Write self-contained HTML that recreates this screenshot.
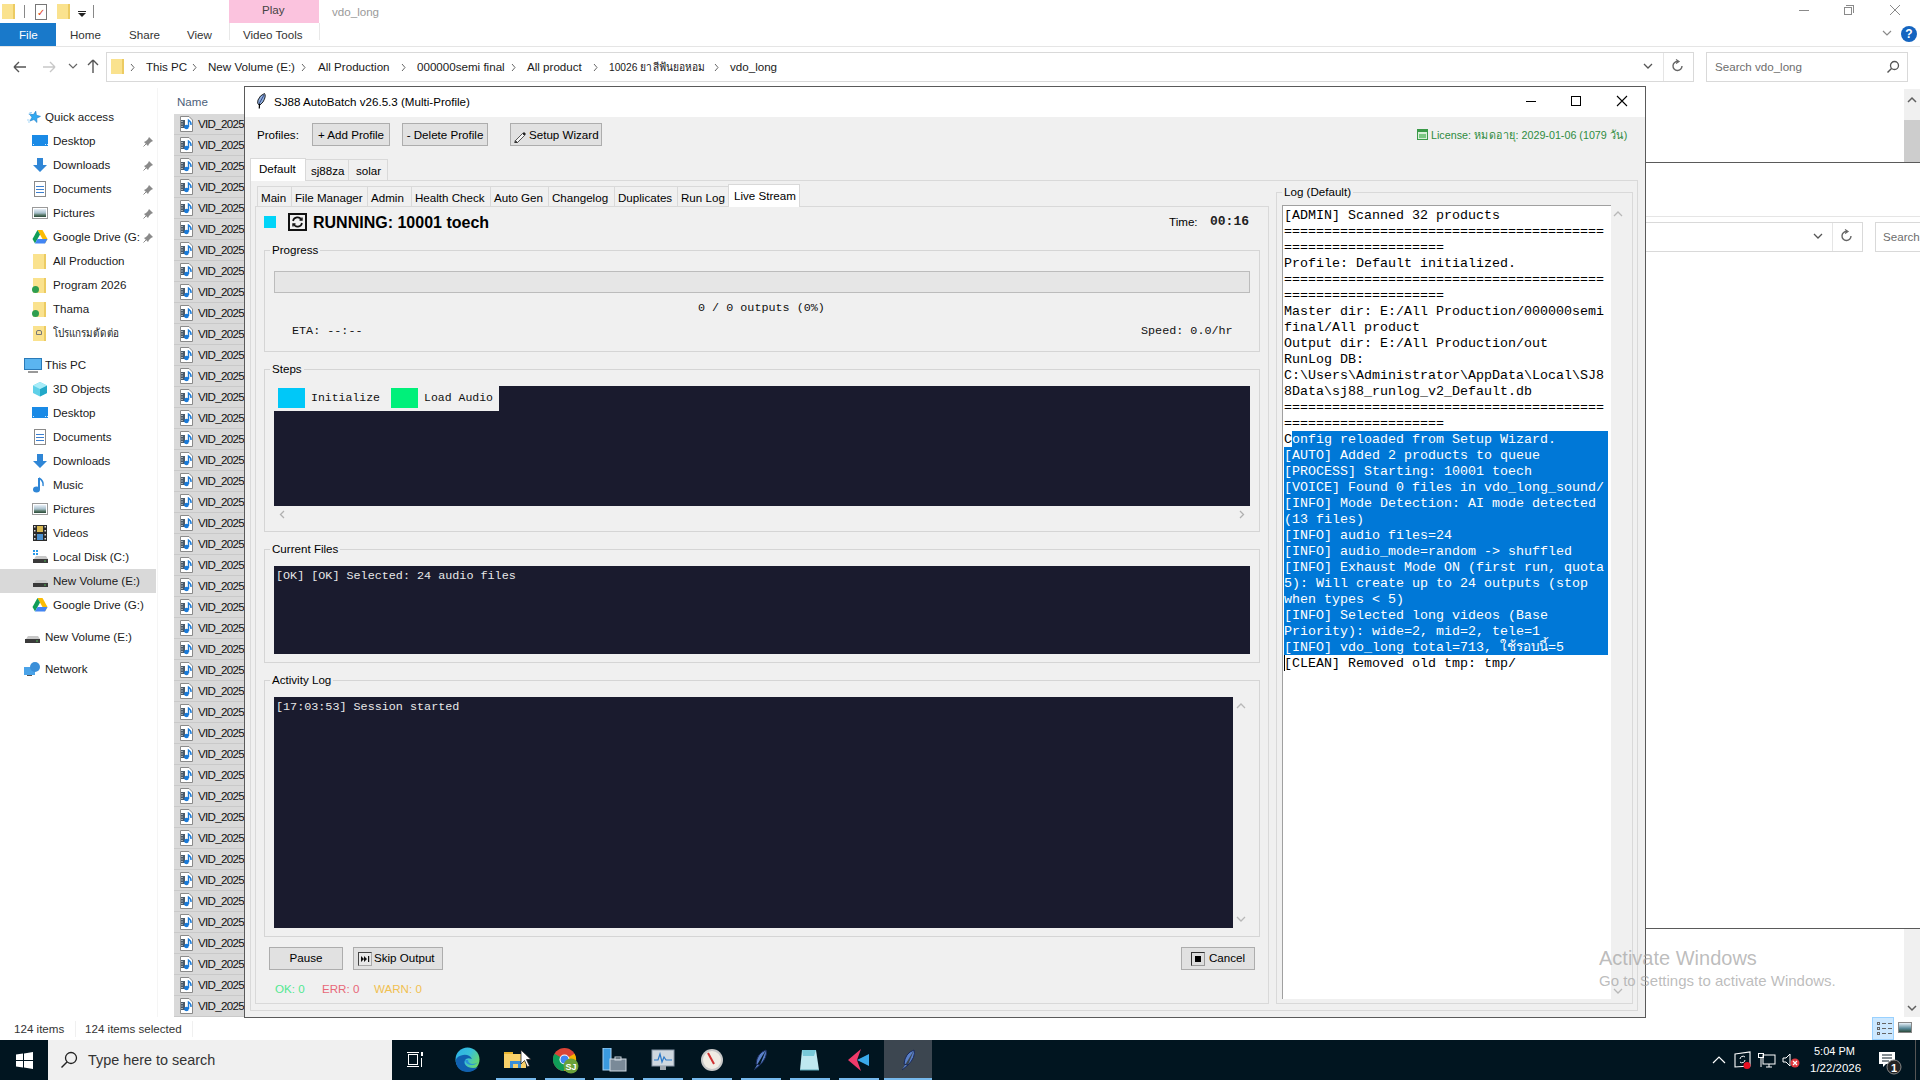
<!DOCTYPE html><html><head><meta charset="utf-8"><style>
*{margin:0;padding:0;box-sizing:border-box}
html,body{width:1920px;height:1080px;overflow:hidden;background:#fff;font-family:"Liberation Sans",sans-serif;font-size:11.6px;color:#000}
.ab{position:absolute}
.t{position:absolute;white-space:nowrap;line-height:14px}
.m{font-family:"Liberation Mono",monospace}
.hl{position:absolute;height:1px}
.vl{position:absolute;width:1px}
</style></head><body><div class="ab" style="left:0;top:0;width:1920px;height:1040px;background:#fff">
<div class="ab" style="left:2px;top:4px;width:13px;height:15px;background:#fae28e;border-right:2px solid #eccb62"></div>
<div class="ab" style="left:24px;top:5px;width:1px;height:13px;background:#888"></div>
<div class="ab" style="left:35px;top:4px;width:12px;height:16px;background:#fff;border:1px solid #777"></div>
<div class="t" style="left:37px;top:5px;"><span style="color:#e04020;font-size:10px">&#10003;</span></div>
<div class="ab" style="left:57px;top:4px;width:13px;height:15px;background:#fae28e;border-right:2px solid #eccb62"></div>
<div class="ab" style="left:78px;top:11px;width:8px;height:1px;background:#222"></div>
<div class="ab" style="left:78px;top:13px;width:0;height:0;border-left:4px solid transparent;border-right:4px solid transparent;border-top:4px solid #222"></div>
<div class="ab" style="left:93px;top:5px;width:1px;height:13px;background:#888"></div>
<div class="ab" style="left:229px;top:0px;width:90px;height:23px;background:#fbc3de"></div>
<div class="t" style="left:262px;top:3px;color:#444">Play</div>
<div class="t" style="left:332px;top:5px;color:#9a9a9a">vdo_long</div>
<div class="ab" style="left:1799px;top:10px;width:10px;height:1px;background:#8a8a8a"></div>
<div class="ab" style="left:1846px;top:5px;width:8px;height:8px;border:1px solid #8a8a8a;border-left:none;border-bottom:none"></div>
<div class="ab" style="left:1844px;top:7px;width:8px;height:8px;border:1px solid #8a8a8a"></div>
<svg class="ab" style="left:1889px;top:4px" width="12" height="12"><path d="M1 1L11 11M11 1L1 11" stroke="#8a8a8a" stroke-width="1"/></svg>
<div class="ab" style="left:0px;top:23px;width:56px;height:23px;background:#1979ca"></div>
<div class="t" style="left:19px;top:28px;color:#fff">File</div>
<div class="t" style="left:70px;top:28px;color:#333">Home</div>
<div class="t" style="left:129px;top:28px;color:#333">Share</div>
<div class="t" style="left:187px;top:28px;color:#333">View</div>
<div class="ab" style="left:229px;top:23px;width:1px;height:17px;background:#e8e8e8"></div>
<div class="ab" style="left:319px;top:23px;width:1px;height:17px;background:#e8e8e8"></div>
<div class="t" style="left:243px;top:28px;color:#333">Video Tools</div>
<svg class="ab" style="left:1882px;top:30px" width="10" height="8"><path d="M1 1L5 5L9 1" stroke="#8a8a8a" fill="none" stroke-width="1.2"/></svg>
<div class="ab" style="left:1901px;top:26px;width:16px;height:16px;border-radius:50%;background:#1565c0;color:#fff;font-weight:bold;font-size:12px;line-height:16px;text-align:center">?</div>
<div class="ab" style="left:0px;top:46px;width:1920px;height:1px;background:#e5e5e5"></div>
<svg class="ab" style="left:12px;top:59px" width="16" height="16"><path d="M2 8H14M2 8L7 3M2 8L7 13" stroke="#555" fill="none" stroke-width="1.4"/></svg>
<svg class="ab" style="left:41px;top:59px" width="16" height="16"><path d="M14 8H2M14 8L9 3M14 8L9 13" stroke="#c8c8c8" fill="none" stroke-width="1.4"/></svg>
<svg class="ab" style="left:68px;top:63px" width="10" height="8"><path d="M1 1L5 5L9 1" stroke="#666" fill="none" stroke-width="1.2"/></svg>
<svg class="ab" style="left:85px;top:58px" width="16" height="16"><path d="M8 15V2M8 2L3 7M8 2L13 7" stroke="#555" fill="none" stroke-width="1.4"/></svg>
<div class="ab" style="left:106px;top:52px;width:1588px;height:30px;border:1px solid #d9d9d9;background:#fff"></div>
<div class="ab" style="left:1663px;top:53px;width:1px;height:28px;background:#e5e5e5"></div>
<div class="ab" style="left:111px;top:59px;width:13px;height:15px;background:#fae28e;border-right:2px solid #eccb62"></div>
<svg class="ab" style="left:130px;top:63px" width="6" height="9"><path d="M1 1L4 4.5L1 8" stroke="#666" fill="none" stroke-width="1"/></svg>
<svg class="ab" style="left:192px;top:63px" width="6" height="9"><path d="M1 1L4 4.5L1 8" stroke="#666" fill="none" stroke-width="1"/></svg>
<svg class="ab" style="left:301px;top:63px" width="6" height="9"><path d="M1 1L4 4.5L1 8" stroke="#666" fill="none" stroke-width="1"/></svg>
<svg class="ab" style="left:401px;top:63px" width="6" height="9"><path d="M1 1L4 4.5L1 8" stroke="#666" fill="none" stroke-width="1"/></svg>
<svg class="ab" style="left:511px;top:63px" width="6" height="9"><path d="M1 1L4 4.5L1 8" stroke="#666" fill="none" stroke-width="1"/></svg>
<svg class="ab" style="left:593px;top:63px" width="6" height="9"><path d="M1 1L4 4.5L1 8" stroke="#666" fill="none" stroke-width="1"/></svg>
<svg class="ab" style="left:714px;top:63px" width="6" height="9"><path d="M1 1L4 4.5L1 8" stroke="#666" fill="none" stroke-width="1"/></svg>
<div class="t" style="left:146px;top:60px;color:#1a1a1a">This PC</div>
<div class="t" style="left:208px;top:60px;color:#1a1a1a">New Volume (E:)</div>
<div class="t" style="left:318px;top:60px;color:#1a1a1a">All Production</div>
<div class="t" style="left:417px;top:60px;color:#1a1a1a">000000semi final</div>
<div class="t" style="left:527px;top:60px;color:#1a1a1a">All product</div>
<div class="t" style="left:609px;top:60px;color:#1a1a1a"><span style="display:inline-block;transform:scaleX(0.88);transform-origin:0 0">10026 ยาสีฟันยอหอม</span></div>
<div class="t" style="left:730px;top:60px;color:#1a1a1a">vdo_long</div>
<svg class="ab" style="left:1643px;top:63px" width="10" height="8"><path d="M1 1L5 5L9 1" stroke="#555" fill="none" stroke-width="1.3"/></svg>
<svg class="ab" style="left:1671px;top:59px" width="14" height="14"><path d="M11 7A4.5 4.5 0 1 1 7 2.5" stroke="#666" fill="none" stroke-width="1.4"/><path d="M5 0.5L8 2.5L5 4.5" stroke="#666" fill="none" stroke-width="1.2"/></svg>
<div class="ab" style="left:1706px;top:52px;width:202px;height:30px;border:1px solid #d9d9d9;background:#fff"></div>
<div class="t" style="left:1715px;top:60px;color:#6d6d6d">Search vdo_long</div>
<svg class="ab" style="left:1886px;top:60px" width="14" height="14"><circle cx="8.5" cy="5.5" r="4" stroke="#555" fill="none" stroke-width="1.3"/><path d="M5.5 8.5L1.5 12.5" stroke="#555" stroke-width="1.5"/></svg>
<div class="ab" style="left:0px;top:569px;width:156px;height:24px;background:#d9d9d9"></div>
<svg class="ab" style="left:26px;top:110px" width="16" height="14"><polygon points="9.75,1.13 10.43,5.26 14.47,6.37 10.75,8.30 10.94,12.48 7.96,9.54 4.04,11.01 5.91,7.27 3.30,4.00 7.44,4.62" fill="#30aaf2" stroke="#1f7cc8" stroke-width="0.6"/><path d="M1 10H3.5M2 12H4M3.5 2.5H6M2.5 4H5" stroke="#7cc4f4" stroke-width="0.7"/></svg>
<div class="t" style="left:45px;top:110px;color:#1a1a1a">Quick access</div>
<div class="ab" style="left:32px;top:135px;width:16px;height:11px;background:#1a8ae6"></div>
<div class="ab" style="left:33px;top:144px;width:1px;height:1px;background:#cfe8ff"></div>
<div class="ab" style="left:45px;top:144px;width:1px;height:1px;background:#cfe8ff"></div>
<div class="ab" style="left:47px;top:144px;width:1px;height:1px;background:#cfe8ff"></div>
<div class="t" style="left:53px;top:134px;color:#1a1a1a">Desktop</div>
<svg class="ab" style="left:143px;top:136px" width="11" height="11"><path d="M6 1L10 5L8 6L6 8L5 10L1 6L3 5L5 3Z" fill="#8a8a8a"/><path d="M3 8L0.5 10.5" stroke="#8a8a8a"/></svg>
<svg class="ab" style="left:32px;top:157px" width="16" height="16"><path d="M5 1H11V8H15L8 15L1 8H5Z" fill="#2f86d6"/></svg>
<div class="t" style="left:53px;top:158px;color:#1a1a1a">Downloads</div>
<svg class="ab" style="left:143px;top:160px" width="11" height="11"><path d="M6 1L10 5L8 6L6 8L5 10L1 6L3 5L5 3Z" fill="#8a8a8a"/><path d="M3 8L0.5 10.5" stroke="#8a8a8a"/></svg>
<div class="ab" style="left:34px;top:181px;width:12px;height:16px;background:#fff;border:1px solid #8a8a8a"></div>
<div class="ab" style="left:36px;top:186px;width:8px;height:1px;background:#3b7fd0"></div>
<div class="ab" style="left:36px;top:189px;width:8px;height:1px;background:#3b7fd0"></div>
<div class="ab" style="left:36px;top:192px;width:8px;height:1px;background:#3b7fd0"></div>
<div class="t" style="left:53px;top:182px;color:#1a1a1a">Documents</div>
<svg class="ab" style="left:143px;top:184px" width="11" height="11"><path d="M6 1L10 5L8 6L6 8L5 10L1 6L3 5L5 3Z" fill="#8a8a8a"/><path d="M3 8L0.5 10.5" stroke="#8a8a8a"/></svg>
<div class="ab" style="left:32px;top:207px;width:16px;height:12px;background:#fff;border:1px solid #9a9a9a;padding:1px"></div>
<div class="ab" style="left:34px;top:209px;width:12px;height:8px;background:linear-gradient(#e8f0f8,#a8c0cc 50%,#5a7a6a 75%,#2a4a3a)"></div>
<div class="t" style="left:53px;top:206px;color:#1a1a1a">Pictures</div>
<svg class="ab" style="left:143px;top:208px" width="11" height="11"><path d="M6 1L10 5L8 6L6 8L5 10L1 6L3 5L5 3Z" fill="#8a8a8a"/><path d="M3 8L0.5 10.5" stroke="#8a8a8a"/></svg>
<svg class="ab" style="left:32px;top:229px" width="16" height="16"><path d="M5.5 1H10.5L15.5 10L13 14.5Z" fill="#fbbc04"/><path d="M5.5 1L0.5 10L3 14.5L8 5.5Z" fill="#0f9d58"/><path d="M3 14.5H13L15.5 10H5.5Z" fill="#4285f4"/></svg>
<div class="t" style="left:53px;top:230px;color:#1a1a1a">Google Drive (G:</div>
<svg class="ab" style="left:143px;top:232px" width="11" height="11"><path d="M6 1L10 5L8 6L6 8L5 10L1 6L3 5L5 3Z" fill="#8a8a8a"/><path d="M3 8L0.5 10.5" stroke="#8a8a8a"/></svg>
<div class="ab" style="left:33px;top:254px;width:13px;height:15px;background:#fae28e;border-right:2px solid #eccb62"></div>
<div class="t" style="left:53px;top:254px;color:#1a1a1a">All Production</div>
<div class="ab" style="left:33px;top:278px;width:13px;height:15px;background:#fae28e;border-right:2px solid #eccb62"></div>
<div class="ab" style="left:32px;top:286px;width:7px;height:7px;border-radius:50%;background:#2e9e4f"></div>
<div class="t" style="left:53px;top:278px;color:#1a1a1a">Program 2026</div>
<div class="ab" style="left:33px;top:302px;width:13px;height:15px;background:#fae28e;border-right:2px solid #eccb62"></div>
<div class="ab" style="left:32px;top:310px;width:7px;height:7px;border-radius:50%;background:#2e9e4f"></div>
<div class="t" style="left:53px;top:302px;color:#1a1a1a">Thama</div>
<div class="ab" style="left:33px;top:326px;width:13px;height:15px;background:#fae28e;border-right:2px solid #eccb62"></div>
<div class="ab" style="left:36px;top:330px;width:6px;height:5px;border:1px solid #777;border-radius:2px 2px 0 0"></div>
<div class="t" style="left:53px;top:326px;color:#1a1a1a"><span style="display:inline-block;transform:scaleX(0.85);transform-origin:0 0">โปรแกรมตัดต่อ</span></div>
<div class="ab" style="left:24px;top:358px;width:18px;height:12px;background:#5bb5f0;border:1px solid #2a7ab8"></div>
<div class="ab" style="left:28px;top:371px;width:10px;height:2px;background:#999"></div>
<div class="t" style="left:45px;top:358px;color:#1a1a1a">This PC</div>
<svg class="ab" style="left:32px;top:381px" width="16" height="16"><path d="M8 1L15 4.5V12L8 15.5L1 12V4.5Z" fill="#5fd0e8"/><path d="M8 8L15 4.5V12L8 15.5Z" fill="#23a8c8"/><path d="M8 1L15 4.5L8 8L1 4.5Z" fill="#a8ecf8"/></svg>
<div class="t" style="left:53px;top:382px;color:#1a1a1a">3D Objects</div>
<div class="ab" style="left:32px;top:407px;width:16px;height:11px;background:#1a8ae6"></div>
<div class="ab" style="left:33px;top:416px;width:1px;height:1px;background:#cfe8ff"></div>
<div class="ab" style="left:45px;top:416px;width:1px;height:1px;background:#cfe8ff"></div>
<div class="ab" style="left:47px;top:416px;width:1px;height:1px;background:#cfe8ff"></div>
<div class="t" style="left:53px;top:406px;color:#1a1a1a">Desktop</div>
<div class="ab" style="left:34px;top:429px;width:12px;height:16px;background:#fff;border:1px solid #8a8a8a"></div>
<div class="ab" style="left:36px;top:434px;width:8px;height:1px;background:#3b7fd0"></div>
<div class="ab" style="left:36px;top:437px;width:8px;height:1px;background:#3b7fd0"></div>
<div class="ab" style="left:36px;top:440px;width:8px;height:1px;background:#3b7fd0"></div>
<div class="t" style="left:53px;top:430px;color:#1a1a1a">Documents</div>
<svg class="ab" style="left:32px;top:453px" width="16" height="16"><path d="M5 1H11V8H15L8 15L1 8H5Z" fill="#2f86d6"/></svg>
<div class="t" style="left:53px;top:454px;color:#1a1a1a">Downloads</div>
<svg class="ab" style="left:32px;top:477px" width="16" height="16"><path d="M7 1V12" stroke="#2f86d6" stroke-width="2"/><ellipse cx="4.5" cy="12.5" rx="3.5" ry="3" fill="#2f86d6"/><path d="M7 1Q12 4 11 9" stroke="#2f86d6" fill="none" stroke-width="1.5"/></svg>
<div class="t" style="left:53px;top:478px;color:#1a1a1a">Music</div>
<div class="ab" style="left:32px;top:503px;width:16px;height:12px;background:#fff;border:1px solid #9a9a9a;padding:1px"></div>
<div class="ab" style="left:34px;top:505px;width:12px;height:8px;background:linear-gradient(#e8f0f8,#a8c0cc 50%,#5a7a6a 75%,#2a4a3a)"></div>
<div class="t" style="left:53px;top:502px;color:#1a1a1a">Pictures</div>
<svg class="ab" style="left:32px;top:525px" width="16" height="16"><rect x="1" y="0" width="14" height="16" fill="#2a2a2a"/><rect x="2" y="1" width="1.5" height="1.5" fill="#ddd"/><rect x="2" y="5" width="1.5" height="1.5" fill="#ddd"/><rect x="2" y="9" width="1.5" height="1.5" fill="#ddd"/><rect x="2" y="13" width="1.5" height="1.5" fill="#ddd"/><rect x="12.5" y="1" width="1.5" height="1.5" fill="#ddd"/><rect x="12.5" y="5" width="1.5" height="1.5" fill="#ddd"/><rect x="12.5" y="9" width="1.5" height="1.5" fill="#ddd"/><rect x="12.5" y="13" width="1.5" height="1.5" fill="#ddd"/><rect x="5" y="1" width="6" height="6" fill="#d8b850"/><rect x="5" y="9" width="6" height="6" fill="#4a90d0"/></svg>
<div class="t" style="left:53px;top:526px;color:#1a1a1a">Videos</div>
<svg class="ab" style="left:32px;top:549px" width="17" height="16"><rect x="1" y="1" width="2" height="2" fill="#2a9ae8"/><rect x="4" y="1" width="2" height="2" fill="#2a9ae8"/><rect x="1" y="4" width="2" height="2" fill="#2a9ae8"/><rect x="4" y="4" width="2" height="2" fill="#2a9ae8"/><path d="M2 10L4 7H14L16 10Z" fill="#c8c8c8"/><rect x="1" y="10" width="15" height="4" fill="#3a3a3a"/><rect x="12" y="11.5" width="2" height="1" fill="#4caf50"/></svg>
<div class="t" style="left:53px;top:550px;color:#1a1a1a">Local Disk (C:)</div>
<svg class="ab" style="left:32px;top:573px" width="17" height="16"><path d="M2 10L4 7H14L16 10Z" fill="#c8c8c8"/><rect x="1" y="10" width="15" height="4" fill="#3a3a3a"/><rect x="12" y="11.5" width="2" height="1" fill="#4caf50"/></svg>
<div class="t" style="left:53px;top:574px;color:#1a1a1a">New Volume (E:)</div>
<svg class="ab" style="left:32px;top:597px" width="16" height="16"><path d="M5.5 1H10.5L15.5 10L13 14.5Z" fill="#fbbc04"/><path d="M5.5 1L0.5 10L3 14.5L8 5.5Z" fill="#0f9d58"/><path d="M3 14.5H13L15.5 10H5.5Z" fill="#4285f4"/></svg>
<div class="t" style="left:53px;top:598px;color:#1a1a1a">Google Drive (G:)</div>
<svg class="ab" style="left:24px;top:629px" width="17" height="16"><path d="M2 10L4 7H14L16 10Z" fill="#c8c8c8"/><rect x="1" y="10" width="15" height="4" fill="#3a3a3a"/><rect x="12" y="11.5" width="2" height="1" fill="#4caf50"/></svg>
<div class="t" style="left:45px;top:630px;color:#1a1a1a">New Volume (E:)</div>
<svg class="ab" style="left:24px;top:661px" width="17" height="16"><rect x="0" y="6" width="11" height="8" fill="#4aa3e8"/><circle cx="11" cy="6" r="5" fill="#3b8fd8"/><rect x="3" y="14" width="5" height="1" fill="#555"/></svg>
<div class="t" style="left:45px;top:662px;color:#1a1a1a">Network</div>
<div class="ab" style="left:157px;top:88px;width:1px;height:929px;background:#f5f5f5"></div>
<div class="t" style="left:177px;top:95px;color:#4c607a">Name</div>
<div class="ab" style="left:174px;top:114px;width:71px;height:21px;background:#d9d9d9;border-bottom:1px solid #c9c9c9"></div>
<svg class="ab" style="left:180px;top:115px" width="14" height="17"><path d="M0.5 1.5H9L12.5 5V16.5H0.5Z" fill="#fff" stroke="#8a8a8a"/><rect x="1" y="5" width="4" height="8" fill="#4a5a6a"/><rect x="1.5" y="6" width="1" height="1" fill="#fff"/><rect x="1.5" y="8.5" width="1" height="1" fill="#fff"/><rect x="1.5" y="11" width="1" height="1" fill="#fff"/><circle cx="6.5" cy="12" r="2.3" fill="#1a7ad8"/><path d="M8.5 12V5Q11.5 7 11 10" stroke="#1a7ad8" fill="none" stroke-width="1.4"/></svg>
<div class="t" style="left:198px;top:117px;color:#111;letter-spacing:-0.7px">VID_2025</div>
<div class="ab" style="left:174px;top:135px;width:71px;height:21px;background:#d9d9d9;border-bottom:1px solid #c9c9c9"></div>
<svg class="ab" style="left:180px;top:136px" width="14" height="17"><path d="M0.5 1.5H9L12.5 5V16.5H0.5Z" fill="#fff" stroke="#8a8a8a"/><rect x="1" y="5" width="4" height="8" fill="#4a5a6a"/><rect x="1.5" y="6" width="1" height="1" fill="#fff"/><rect x="1.5" y="8.5" width="1" height="1" fill="#fff"/><rect x="1.5" y="11" width="1" height="1" fill="#fff"/><circle cx="6.5" cy="12" r="2.3" fill="#1a7ad8"/><path d="M8.5 12V5Q11.5 7 11 10" stroke="#1a7ad8" fill="none" stroke-width="1.4"/></svg>
<div class="t" style="left:198px;top:138px;color:#111;letter-spacing:-0.7px">VID_2025</div>
<div class="ab" style="left:174px;top:156px;width:71px;height:21px;background:#d9d9d9;border-bottom:1px solid #c9c9c9"></div>
<svg class="ab" style="left:180px;top:157px" width="14" height="17"><path d="M0.5 1.5H9L12.5 5V16.5H0.5Z" fill="#fff" stroke="#8a8a8a"/><rect x="1" y="5" width="4" height="8" fill="#4a5a6a"/><rect x="1.5" y="6" width="1" height="1" fill="#fff"/><rect x="1.5" y="8.5" width="1" height="1" fill="#fff"/><rect x="1.5" y="11" width="1" height="1" fill="#fff"/><circle cx="6.5" cy="12" r="2.3" fill="#1a7ad8"/><path d="M8.5 12V5Q11.5 7 11 10" stroke="#1a7ad8" fill="none" stroke-width="1.4"/></svg>
<div class="t" style="left:198px;top:159px;color:#111;letter-spacing:-0.7px">VID_2025</div>
<div class="ab" style="left:174px;top:177px;width:71px;height:21px;background:#d9d9d9;border-bottom:1px solid #c9c9c9"></div>
<svg class="ab" style="left:180px;top:178px" width="14" height="17"><path d="M0.5 1.5H9L12.5 5V16.5H0.5Z" fill="#fff" stroke="#8a8a8a"/><rect x="1" y="5" width="4" height="8" fill="#4a5a6a"/><rect x="1.5" y="6" width="1" height="1" fill="#fff"/><rect x="1.5" y="8.5" width="1" height="1" fill="#fff"/><rect x="1.5" y="11" width="1" height="1" fill="#fff"/><circle cx="6.5" cy="12" r="2.3" fill="#1a7ad8"/><path d="M8.5 12V5Q11.5 7 11 10" stroke="#1a7ad8" fill="none" stroke-width="1.4"/></svg>
<div class="t" style="left:198px;top:180px;color:#111;letter-spacing:-0.7px">VID_2025</div>
<div class="ab" style="left:174px;top:198px;width:71px;height:21px;background:#d9d9d9;border-bottom:1px solid #c9c9c9"></div>
<svg class="ab" style="left:180px;top:199px" width="14" height="17"><path d="M0.5 1.5H9L12.5 5V16.5H0.5Z" fill="#fff" stroke="#8a8a8a"/><rect x="1" y="5" width="4" height="8" fill="#4a5a6a"/><rect x="1.5" y="6" width="1" height="1" fill="#fff"/><rect x="1.5" y="8.5" width="1" height="1" fill="#fff"/><rect x="1.5" y="11" width="1" height="1" fill="#fff"/><circle cx="6.5" cy="12" r="2.3" fill="#1a7ad8"/><path d="M8.5 12V5Q11.5 7 11 10" stroke="#1a7ad8" fill="none" stroke-width="1.4"/></svg>
<div class="t" style="left:198px;top:201px;color:#111;letter-spacing:-0.7px">VID_2025</div>
<div class="ab" style="left:174px;top:219px;width:71px;height:21px;background:#d9d9d9;border-bottom:1px solid #c9c9c9"></div>
<svg class="ab" style="left:180px;top:220px" width="14" height="17"><path d="M0.5 1.5H9L12.5 5V16.5H0.5Z" fill="#fff" stroke="#8a8a8a"/><rect x="1" y="5" width="4" height="8" fill="#4a5a6a"/><rect x="1.5" y="6" width="1" height="1" fill="#fff"/><rect x="1.5" y="8.5" width="1" height="1" fill="#fff"/><rect x="1.5" y="11" width="1" height="1" fill="#fff"/><circle cx="6.5" cy="12" r="2.3" fill="#1a7ad8"/><path d="M8.5 12V5Q11.5 7 11 10" stroke="#1a7ad8" fill="none" stroke-width="1.4"/></svg>
<div class="t" style="left:198px;top:222px;color:#111;letter-spacing:-0.7px">VID_2025</div>
<div class="ab" style="left:174px;top:240px;width:71px;height:21px;background:#d9d9d9;border-bottom:1px solid #c9c9c9"></div>
<svg class="ab" style="left:180px;top:241px" width="14" height="17"><path d="M0.5 1.5H9L12.5 5V16.5H0.5Z" fill="#fff" stroke="#8a8a8a"/><rect x="1" y="5" width="4" height="8" fill="#4a5a6a"/><rect x="1.5" y="6" width="1" height="1" fill="#fff"/><rect x="1.5" y="8.5" width="1" height="1" fill="#fff"/><rect x="1.5" y="11" width="1" height="1" fill="#fff"/><circle cx="6.5" cy="12" r="2.3" fill="#1a7ad8"/><path d="M8.5 12V5Q11.5 7 11 10" stroke="#1a7ad8" fill="none" stroke-width="1.4"/></svg>
<div class="t" style="left:198px;top:243px;color:#111;letter-spacing:-0.7px">VID_2025</div>
<div class="ab" style="left:174px;top:261px;width:71px;height:21px;background:#d9d9d9;border-bottom:1px solid #c9c9c9"></div>
<svg class="ab" style="left:180px;top:262px" width="14" height="17"><path d="M0.5 1.5H9L12.5 5V16.5H0.5Z" fill="#fff" stroke="#8a8a8a"/><rect x="1" y="5" width="4" height="8" fill="#4a5a6a"/><rect x="1.5" y="6" width="1" height="1" fill="#fff"/><rect x="1.5" y="8.5" width="1" height="1" fill="#fff"/><rect x="1.5" y="11" width="1" height="1" fill="#fff"/><circle cx="6.5" cy="12" r="2.3" fill="#1a7ad8"/><path d="M8.5 12V5Q11.5 7 11 10" stroke="#1a7ad8" fill="none" stroke-width="1.4"/></svg>
<div class="t" style="left:198px;top:264px;color:#111;letter-spacing:-0.7px">VID_2025</div>
<div class="ab" style="left:174px;top:282px;width:71px;height:21px;background:#d9d9d9;border-bottom:1px solid #c9c9c9"></div>
<svg class="ab" style="left:180px;top:283px" width="14" height="17"><path d="M0.5 1.5H9L12.5 5V16.5H0.5Z" fill="#fff" stroke="#8a8a8a"/><rect x="1" y="5" width="4" height="8" fill="#4a5a6a"/><rect x="1.5" y="6" width="1" height="1" fill="#fff"/><rect x="1.5" y="8.5" width="1" height="1" fill="#fff"/><rect x="1.5" y="11" width="1" height="1" fill="#fff"/><circle cx="6.5" cy="12" r="2.3" fill="#1a7ad8"/><path d="M8.5 12V5Q11.5 7 11 10" stroke="#1a7ad8" fill="none" stroke-width="1.4"/></svg>
<div class="t" style="left:198px;top:285px;color:#111;letter-spacing:-0.7px">VID_2025</div>
<div class="ab" style="left:174px;top:303px;width:71px;height:21px;background:#d9d9d9;border-bottom:1px solid #c9c9c9"></div>
<svg class="ab" style="left:180px;top:304px" width="14" height="17"><path d="M0.5 1.5H9L12.5 5V16.5H0.5Z" fill="#fff" stroke="#8a8a8a"/><rect x="1" y="5" width="4" height="8" fill="#4a5a6a"/><rect x="1.5" y="6" width="1" height="1" fill="#fff"/><rect x="1.5" y="8.5" width="1" height="1" fill="#fff"/><rect x="1.5" y="11" width="1" height="1" fill="#fff"/><circle cx="6.5" cy="12" r="2.3" fill="#1a7ad8"/><path d="M8.5 12V5Q11.5 7 11 10" stroke="#1a7ad8" fill="none" stroke-width="1.4"/></svg>
<div class="t" style="left:198px;top:306px;color:#111;letter-spacing:-0.7px">VID_2025</div>
<div class="ab" style="left:174px;top:324px;width:71px;height:21px;background:#d9d9d9;border-bottom:1px solid #c9c9c9"></div>
<svg class="ab" style="left:180px;top:325px" width="14" height="17"><path d="M0.5 1.5H9L12.5 5V16.5H0.5Z" fill="#fff" stroke="#8a8a8a"/><rect x="1" y="5" width="4" height="8" fill="#4a5a6a"/><rect x="1.5" y="6" width="1" height="1" fill="#fff"/><rect x="1.5" y="8.5" width="1" height="1" fill="#fff"/><rect x="1.5" y="11" width="1" height="1" fill="#fff"/><circle cx="6.5" cy="12" r="2.3" fill="#1a7ad8"/><path d="M8.5 12V5Q11.5 7 11 10" stroke="#1a7ad8" fill="none" stroke-width="1.4"/></svg>
<div class="t" style="left:198px;top:327px;color:#111;letter-spacing:-0.7px">VID_2025</div>
<div class="ab" style="left:174px;top:345px;width:71px;height:21px;background:#d9d9d9;border-bottom:1px solid #c9c9c9"></div>
<svg class="ab" style="left:180px;top:346px" width="14" height="17"><path d="M0.5 1.5H9L12.5 5V16.5H0.5Z" fill="#fff" stroke="#8a8a8a"/><rect x="1" y="5" width="4" height="8" fill="#4a5a6a"/><rect x="1.5" y="6" width="1" height="1" fill="#fff"/><rect x="1.5" y="8.5" width="1" height="1" fill="#fff"/><rect x="1.5" y="11" width="1" height="1" fill="#fff"/><circle cx="6.5" cy="12" r="2.3" fill="#1a7ad8"/><path d="M8.5 12V5Q11.5 7 11 10" stroke="#1a7ad8" fill="none" stroke-width="1.4"/></svg>
<div class="t" style="left:198px;top:348px;color:#111;letter-spacing:-0.7px">VID_2025</div>
<div class="ab" style="left:174px;top:366px;width:71px;height:21px;background:#d9d9d9;border-bottom:1px solid #c9c9c9"></div>
<svg class="ab" style="left:180px;top:367px" width="14" height="17"><path d="M0.5 1.5H9L12.5 5V16.5H0.5Z" fill="#fff" stroke="#8a8a8a"/><rect x="1" y="5" width="4" height="8" fill="#4a5a6a"/><rect x="1.5" y="6" width="1" height="1" fill="#fff"/><rect x="1.5" y="8.5" width="1" height="1" fill="#fff"/><rect x="1.5" y="11" width="1" height="1" fill="#fff"/><circle cx="6.5" cy="12" r="2.3" fill="#1a7ad8"/><path d="M8.5 12V5Q11.5 7 11 10" stroke="#1a7ad8" fill="none" stroke-width="1.4"/></svg>
<div class="t" style="left:198px;top:369px;color:#111;letter-spacing:-0.7px">VID_2025</div>
<div class="ab" style="left:174px;top:387px;width:71px;height:21px;background:#d9d9d9;border-bottom:1px solid #c9c9c9"></div>
<svg class="ab" style="left:180px;top:388px" width="14" height="17"><path d="M0.5 1.5H9L12.5 5V16.5H0.5Z" fill="#fff" stroke="#8a8a8a"/><rect x="1" y="5" width="4" height="8" fill="#4a5a6a"/><rect x="1.5" y="6" width="1" height="1" fill="#fff"/><rect x="1.5" y="8.5" width="1" height="1" fill="#fff"/><rect x="1.5" y="11" width="1" height="1" fill="#fff"/><circle cx="6.5" cy="12" r="2.3" fill="#1a7ad8"/><path d="M8.5 12V5Q11.5 7 11 10" stroke="#1a7ad8" fill="none" stroke-width="1.4"/></svg>
<div class="t" style="left:198px;top:390px;color:#111;letter-spacing:-0.7px">VID_2025</div>
<div class="ab" style="left:174px;top:408px;width:71px;height:21px;background:#d9d9d9;border-bottom:1px solid #c9c9c9"></div>
<svg class="ab" style="left:180px;top:409px" width="14" height="17"><path d="M0.5 1.5H9L12.5 5V16.5H0.5Z" fill="#fff" stroke="#8a8a8a"/><rect x="1" y="5" width="4" height="8" fill="#4a5a6a"/><rect x="1.5" y="6" width="1" height="1" fill="#fff"/><rect x="1.5" y="8.5" width="1" height="1" fill="#fff"/><rect x="1.5" y="11" width="1" height="1" fill="#fff"/><circle cx="6.5" cy="12" r="2.3" fill="#1a7ad8"/><path d="M8.5 12V5Q11.5 7 11 10" stroke="#1a7ad8" fill="none" stroke-width="1.4"/></svg>
<div class="t" style="left:198px;top:411px;color:#111;letter-spacing:-0.7px">VID_2025</div>
<div class="ab" style="left:174px;top:429px;width:71px;height:21px;background:#d9d9d9;border-bottom:1px solid #c9c9c9"></div>
<svg class="ab" style="left:180px;top:430px" width="14" height="17"><path d="M0.5 1.5H9L12.5 5V16.5H0.5Z" fill="#fff" stroke="#8a8a8a"/><rect x="1" y="5" width="4" height="8" fill="#4a5a6a"/><rect x="1.5" y="6" width="1" height="1" fill="#fff"/><rect x="1.5" y="8.5" width="1" height="1" fill="#fff"/><rect x="1.5" y="11" width="1" height="1" fill="#fff"/><circle cx="6.5" cy="12" r="2.3" fill="#1a7ad8"/><path d="M8.5 12V5Q11.5 7 11 10" stroke="#1a7ad8" fill="none" stroke-width="1.4"/></svg>
<div class="t" style="left:198px;top:432px;color:#111;letter-spacing:-0.7px">VID_2025</div>
<div class="ab" style="left:174px;top:450px;width:71px;height:21px;background:#d9d9d9;border-bottom:1px solid #c9c9c9"></div>
<svg class="ab" style="left:180px;top:451px" width="14" height="17"><path d="M0.5 1.5H9L12.5 5V16.5H0.5Z" fill="#fff" stroke="#8a8a8a"/><rect x="1" y="5" width="4" height="8" fill="#4a5a6a"/><rect x="1.5" y="6" width="1" height="1" fill="#fff"/><rect x="1.5" y="8.5" width="1" height="1" fill="#fff"/><rect x="1.5" y="11" width="1" height="1" fill="#fff"/><circle cx="6.5" cy="12" r="2.3" fill="#1a7ad8"/><path d="M8.5 12V5Q11.5 7 11 10" stroke="#1a7ad8" fill="none" stroke-width="1.4"/></svg>
<div class="t" style="left:198px;top:453px;color:#111;letter-spacing:-0.7px">VID_2025</div>
<div class="ab" style="left:174px;top:471px;width:71px;height:21px;background:#d9d9d9;border-bottom:1px solid #c9c9c9"></div>
<svg class="ab" style="left:180px;top:472px" width="14" height="17"><path d="M0.5 1.5H9L12.5 5V16.5H0.5Z" fill="#fff" stroke="#8a8a8a"/><rect x="1" y="5" width="4" height="8" fill="#4a5a6a"/><rect x="1.5" y="6" width="1" height="1" fill="#fff"/><rect x="1.5" y="8.5" width="1" height="1" fill="#fff"/><rect x="1.5" y="11" width="1" height="1" fill="#fff"/><circle cx="6.5" cy="12" r="2.3" fill="#1a7ad8"/><path d="M8.5 12V5Q11.5 7 11 10" stroke="#1a7ad8" fill="none" stroke-width="1.4"/></svg>
<div class="t" style="left:198px;top:474px;color:#111;letter-spacing:-0.7px">VID_2025</div>
<div class="ab" style="left:174px;top:492px;width:71px;height:21px;background:#d9d9d9;border-bottom:1px solid #c9c9c9"></div>
<svg class="ab" style="left:180px;top:493px" width="14" height="17"><path d="M0.5 1.5H9L12.5 5V16.5H0.5Z" fill="#fff" stroke="#8a8a8a"/><rect x="1" y="5" width="4" height="8" fill="#4a5a6a"/><rect x="1.5" y="6" width="1" height="1" fill="#fff"/><rect x="1.5" y="8.5" width="1" height="1" fill="#fff"/><rect x="1.5" y="11" width="1" height="1" fill="#fff"/><circle cx="6.5" cy="12" r="2.3" fill="#1a7ad8"/><path d="M8.5 12V5Q11.5 7 11 10" stroke="#1a7ad8" fill="none" stroke-width="1.4"/></svg>
<div class="t" style="left:198px;top:495px;color:#111;letter-spacing:-0.7px">VID_2025</div>
<div class="ab" style="left:174px;top:513px;width:71px;height:21px;background:#d9d9d9;border-bottom:1px solid #c9c9c9"></div>
<svg class="ab" style="left:180px;top:514px" width="14" height="17"><path d="M0.5 1.5H9L12.5 5V16.5H0.5Z" fill="#fff" stroke="#8a8a8a"/><rect x="1" y="5" width="4" height="8" fill="#4a5a6a"/><rect x="1.5" y="6" width="1" height="1" fill="#fff"/><rect x="1.5" y="8.5" width="1" height="1" fill="#fff"/><rect x="1.5" y="11" width="1" height="1" fill="#fff"/><circle cx="6.5" cy="12" r="2.3" fill="#1a7ad8"/><path d="M8.5 12V5Q11.5 7 11 10" stroke="#1a7ad8" fill="none" stroke-width="1.4"/></svg>
<div class="t" style="left:198px;top:516px;color:#111;letter-spacing:-0.7px">VID_2025</div>
<div class="ab" style="left:174px;top:534px;width:71px;height:21px;background:#d9d9d9;border-bottom:1px solid #c9c9c9"></div>
<svg class="ab" style="left:180px;top:535px" width="14" height="17"><path d="M0.5 1.5H9L12.5 5V16.5H0.5Z" fill="#fff" stroke="#8a8a8a"/><rect x="1" y="5" width="4" height="8" fill="#4a5a6a"/><rect x="1.5" y="6" width="1" height="1" fill="#fff"/><rect x="1.5" y="8.5" width="1" height="1" fill="#fff"/><rect x="1.5" y="11" width="1" height="1" fill="#fff"/><circle cx="6.5" cy="12" r="2.3" fill="#1a7ad8"/><path d="M8.5 12V5Q11.5 7 11 10" stroke="#1a7ad8" fill="none" stroke-width="1.4"/></svg>
<div class="t" style="left:198px;top:537px;color:#111;letter-spacing:-0.7px">VID_2025</div>
<div class="ab" style="left:174px;top:555px;width:71px;height:21px;background:#d9d9d9;border-bottom:1px solid #c9c9c9"></div>
<svg class="ab" style="left:180px;top:556px" width="14" height="17"><path d="M0.5 1.5H9L12.5 5V16.5H0.5Z" fill="#fff" stroke="#8a8a8a"/><rect x="1" y="5" width="4" height="8" fill="#4a5a6a"/><rect x="1.5" y="6" width="1" height="1" fill="#fff"/><rect x="1.5" y="8.5" width="1" height="1" fill="#fff"/><rect x="1.5" y="11" width="1" height="1" fill="#fff"/><circle cx="6.5" cy="12" r="2.3" fill="#1a7ad8"/><path d="M8.5 12V5Q11.5 7 11 10" stroke="#1a7ad8" fill="none" stroke-width="1.4"/></svg>
<div class="t" style="left:198px;top:558px;color:#111;letter-spacing:-0.7px">VID_2025</div>
<div class="ab" style="left:174px;top:576px;width:71px;height:21px;background:#d9d9d9;border-bottom:1px solid #c9c9c9"></div>
<svg class="ab" style="left:180px;top:577px" width="14" height="17"><path d="M0.5 1.5H9L12.5 5V16.5H0.5Z" fill="#fff" stroke="#8a8a8a"/><rect x="1" y="5" width="4" height="8" fill="#4a5a6a"/><rect x="1.5" y="6" width="1" height="1" fill="#fff"/><rect x="1.5" y="8.5" width="1" height="1" fill="#fff"/><rect x="1.5" y="11" width="1" height="1" fill="#fff"/><circle cx="6.5" cy="12" r="2.3" fill="#1a7ad8"/><path d="M8.5 12V5Q11.5 7 11 10" stroke="#1a7ad8" fill="none" stroke-width="1.4"/></svg>
<div class="t" style="left:198px;top:579px;color:#111;letter-spacing:-0.7px">VID_2025</div>
<div class="ab" style="left:174px;top:597px;width:71px;height:21px;background:#d9d9d9;border-bottom:1px solid #c9c9c9"></div>
<svg class="ab" style="left:180px;top:598px" width="14" height="17"><path d="M0.5 1.5H9L12.5 5V16.5H0.5Z" fill="#fff" stroke="#8a8a8a"/><rect x="1" y="5" width="4" height="8" fill="#4a5a6a"/><rect x="1.5" y="6" width="1" height="1" fill="#fff"/><rect x="1.5" y="8.5" width="1" height="1" fill="#fff"/><rect x="1.5" y="11" width="1" height="1" fill="#fff"/><circle cx="6.5" cy="12" r="2.3" fill="#1a7ad8"/><path d="M8.5 12V5Q11.5 7 11 10" stroke="#1a7ad8" fill="none" stroke-width="1.4"/></svg>
<div class="t" style="left:198px;top:600px;color:#111;letter-spacing:-0.7px">VID_2025</div>
<div class="ab" style="left:174px;top:618px;width:71px;height:21px;background:#d9d9d9;border-bottom:1px solid #c9c9c9"></div>
<svg class="ab" style="left:180px;top:619px" width="14" height="17"><path d="M0.5 1.5H9L12.5 5V16.5H0.5Z" fill="#fff" stroke="#8a8a8a"/><rect x="1" y="5" width="4" height="8" fill="#4a5a6a"/><rect x="1.5" y="6" width="1" height="1" fill="#fff"/><rect x="1.5" y="8.5" width="1" height="1" fill="#fff"/><rect x="1.5" y="11" width="1" height="1" fill="#fff"/><circle cx="6.5" cy="12" r="2.3" fill="#1a7ad8"/><path d="M8.5 12V5Q11.5 7 11 10" stroke="#1a7ad8" fill="none" stroke-width="1.4"/></svg>
<div class="t" style="left:198px;top:621px;color:#111;letter-spacing:-0.7px">VID_2025</div>
<div class="ab" style="left:174px;top:639px;width:71px;height:21px;background:#d9d9d9;border-bottom:1px solid #c9c9c9"></div>
<svg class="ab" style="left:180px;top:640px" width="14" height="17"><path d="M0.5 1.5H9L12.5 5V16.5H0.5Z" fill="#fff" stroke="#8a8a8a"/><rect x="1" y="5" width="4" height="8" fill="#4a5a6a"/><rect x="1.5" y="6" width="1" height="1" fill="#fff"/><rect x="1.5" y="8.5" width="1" height="1" fill="#fff"/><rect x="1.5" y="11" width="1" height="1" fill="#fff"/><circle cx="6.5" cy="12" r="2.3" fill="#1a7ad8"/><path d="M8.5 12V5Q11.5 7 11 10" stroke="#1a7ad8" fill="none" stroke-width="1.4"/></svg>
<div class="t" style="left:198px;top:642px;color:#111;letter-spacing:-0.7px">VID_2025</div>
<div class="ab" style="left:174px;top:660px;width:71px;height:21px;background:#d9d9d9;border-bottom:1px solid #c9c9c9"></div>
<svg class="ab" style="left:180px;top:661px" width="14" height="17"><path d="M0.5 1.5H9L12.5 5V16.5H0.5Z" fill="#fff" stroke="#8a8a8a"/><rect x="1" y="5" width="4" height="8" fill="#4a5a6a"/><rect x="1.5" y="6" width="1" height="1" fill="#fff"/><rect x="1.5" y="8.5" width="1" height="1" fill="#fff"/><rect x="1.5" y="11" width="1" height="1" fill="#fff"/><circle cx="6.5" cy="12" r="2.3" fill="#1a7ad8"/><path d="M8.5 12V5Q11.5 7 11 10" stroke="#1a7ad8" fill="none" stroke-width="1.4"/></svg>
<div class="t" style="left:198px;top:663px;color:#111;letter-spacing:-0.7px">VID_2025</div>
<div class="ab" style="left:174px;top:681px;width:71px;height:21px;background:#d9d9d9;border-bottom:1px solid #c9c9c9"></div>
<svg class="ab" style="left:180px;top:682px" width="14" height="17"><path d="M0.5 1.5H9L12.5 5V16.5H0.5Z" fill="#fff" stroke="#8a8a8a"/><rect x="1" y="5" width="4" height="8" fill="#4a5a6a"/><rect x="1.5" y="6" width="1" height="1" fill="#fff"/><rect x="1.5" y="8.5" width="1" height="1" fill="#fff"/><rect x="1.5" y="11" width="1" height="1" fill="#fff"/><circle cx="6.5" cy="12" r="2.3" fill="#1a7ad8"/><path d="M8.5 12V5Q11.5 7 11 10" stroke="#1a7ad8" fill="none" stroke-width="1.4"/></svg>
<div class="t" style="left:198px;top:684px;color:#111;letter-spacing:-0.7px">VID_2025</div>
<div class="ab" style="left:174px;top:702px;width:71px;height:21px;background:#d9d9d9;border-bottom:1px solid #c9c9c9"></div>
<svg class="ab" style="left:180px;top:703px" width="14" height="17"><path d="M0.5 1.5H9L12.5 5V16.5H0.5Z" fill="#fff" stroke="#8a8a8a"/><rect x="1" y="5" width="4" height="8" fill="#4a5a6a"/><rect x="1.5" y="6" width="1" height="1" fill="#fff"/><rect x="1.5" y="8.5" width="1" height="1" fill="#fff"/><rect x="1.5" y="11" width="1" height="1" fill="#fff"/><circle cx="6.5" cy="12" r="2.3" fill="#1a7ad8"/><path d="M8.5 12V5Q11.5 7 11 10" stroke="#1a7ad8" fill="none" stroke-width="1.4"/></svg>
<div class="t" style="left:198px;top:705px;color:#111;letter-spacing:-0.7px">VID_2025</div>
<div class="ab" style="left:174px;top:723px;width:71px;height:21px;background:#d9d9d9;border-bottom:1px solid #c9c9c9"></div>
<svg class="ab" style="left:180px;top:724px" width="14" height="17"><path d="M0.5 1.5H9L12.5 5V16.5H0.5Z" fill="#fff" stroke="#8a8a8a"/><rect x="1" y="5" width="4" height="8" fill="#4a5a6a"/><rect x="1.5" y="6" width="1" height="1" fill="#fff"/><rect x="1.5" y="8.5" width="1" height="1" fill="#fff"/><rect x="1.5" y="11" width="1" height="1" fill="#fff"/><circle cx="6.5" cy="12" r="2.3" fill="#1a7ad8"/><path d="M8.5 12V5Q11.5 7 11 10" stroke="#1a7ad8" fill="none" stroke-width="1.4"/></svg>
<div class="t" style="left:198px;top:726px;color:#111;letter-spacing:-0.7px">VID_2025</div>
<div class="ab" style="left:174px;top:744px;width:71px;height:21px;background:#d9d9d9;border-bottom:1px solid #c9c9c9"></div>
<svg class="ab" style="left:180px;top:745px" width="14" height="17"><path d="M0.5 1.5H9L12.5 5V16.5H0.5Z" fill="#fff" stroke="#8a8a8a"/><rect x="1" y="5" width="4" height="8" fill="#4a5a6a"/><rect x="1.5" y="6" width="1" height="1" fill="#fff"/><rect x="1.5" y="8.5" width="1" height="1" fill="#fff"/><rect x="1.5" y="11" width="1" height="1" fill="#fff"/><circle cx="6.5" cy="12" r="2.3" fill="#1a7ad8"/><path d="M8.5 12V5Q11.5 7 11 10" stroke="#1a7ad8" fill="none" stroke-width="1.4"/></svg>
<div class="t" style="left:198px;top:747px;color:#111;letter-spacing:-0.7px">VID_2025</div>
<div class="ab" style="left:174px;top:765px;width:71px;height:21px;background:#d9d9d9;border-bottom:1px solid #c9c9c9"></div>
<svg class="ab" style="left:180px;top:766px" width="14" height="17"><path d="M0.5 1.5H9L12.5 5V16.5H0.5Z" fill="#fff" stroke="#8a8a8a"/><rect x="1" y="5" width="4" height="8" fill="#4a5a6a"/><rect x="1.5" y="6" width="1" height="1" fill="#fff"/><rect x="1.5" y="8.5" width="1" height="1" fill="#fff"/><rect x="1.5" y="11" width="1" height="1" fill="#fff"/><circle cx="6.5" cy="12" r="2.3" fill="#1a7ad8"/><path d="M8.5 12V5Q11.5 7 11 10" stroke="#1a7ad8" fill="none" stroke-width="1.4"/></svg>
<div class="t" style="left:198px;top:768px;color:#111;letter-spacing:-0.7px">VID_2025</div>
<div class="ab" style="left:174px;top:786px;width:71px;height:21px;background:#d9d9d9;border-bottom:1px solid #c9c9c9"></div>
<svg class="ab" style="left:180px;top:787px" width="14" height="17"><path d="M0.5 1.5H9L12.5 5V16.5H0.5Z" fill="#fff" stroke="#8a8a8a"/><rect x="1" y="5" width="4" height="8" fill="#4a5a6a"/><rect x="1.5" y="6" width="1" height="1" fill="#fff"/><rect x="1.5" y="8.5" width="1" height="1" fill="#fff"/><rect x="1.5" y="11" width="1" height="1" fill="#fff"/><circle cx="6.5" cy="12" r="2.3" fill="#1a7ad8"/><path d="M8.5 12V5Q11.5 7 11 10" stroke="#1a7ad8" fill="none" stroke-width="1.4"/></svg>
<div class="t" style="left:198px;top:789px;color:#111;letter-spacing:-0.7px">VID_2025</div>
<div class="ab" style="left:174px;top:807px;width:71px;height:21px;background:#d9d9d9;border-bottom:1px solid #c9c9c9"></div>
<svg class="ab" style="left:180px;top:808px" width="14" height="17"><path d="M0.5 1.5H9L12.5 5V16.5H0.5Z" fill="#fff" stroke="#8a8a8a"/><rect x="1" y="5" width="4" height="8" fill="#4a5a6a"/><rect x="1.5" y="6" width="1" height="1" fill="#fff"/><rect x="1.5" y="8.5" width="1" height="1" fill="#fff"/><rect x="1.5" y="11" width="1" height="1" fill="#fff"/><circle cx="6.5" cy="12" r="2.3" fill="#1a7ad8"/><path d="M8.5 12V5Q11.5 7 11 10" stroke="#1a7ad8" fill="none" stroke-width="1.4"/></svg>
<div class="t" style="left:198px;top:810px;color:#111;letter-spacing:-0.7px">VID_2025</div>
<div class="ab" style="left:174px;top:828px;width:71px;height:21px;background:#d9d9d9;border-bottom:1px solid #c9c9c9"></div>
<svg class="ab" style="left:180px;top:829px" width="14" height="17"><path d="M0.5 1.5H9L12.5 5V16.5H0.5Z" fill="#fff" stroke="#8a8a8a"/><rect x="1" y="5" width="4" height="8" fill="#4a5a6a"/><rect x="1.5" y="6" width="1" height="1" fill="#fff"/><rect x="1.5" y="8.5" width="1" height="1" fill="#fff"/><rect x="1.5" y="11" width="1" height="1" fill="#fff"/><circle cx="6.5" cy="12" r="2.3" fill="#1a7ad8"/><path d="M8.5 12V5Q11.5 7 11 10" stroke="#1a7ad8" fill="none" stroke-width="1.4"/></svg>
<div class="t" style="left:198px;top:831px;color:#111;letter-spacing:-0.7px">VID_2025</div>
<div class="ab" style="left:174px;top:849px;width:71px;height:21px;background:#d9d9d9;border-bottom:1px solid #c9c9c9"></div>
<svg class="ab" style="left:180px;top:850px" width="14" height="17"><path d="M0.5 1.5H9L12.5 5V16.5H0.5Z" fill="#fff" stroke="#8a8a8a"/><rect x="1" y="5" width="4" height="8" fill="#4a5a6a"/><rect x="1.5" y="6" width="1" height="1" fill="#fff"/><rect x="1.5" y="8.5" width="1" height="1" fill="#fff"/><rect x="1.5" y="11" width="1" height="1" fill="#fff"/><circle cx="6.5" cy="12" r="2.3" fill="#1a7ad8"/><path d="M8.5 12V5Q11.5 7 11 10" stroke="#1a7ad8" fill="none" stroke-width="1.4"/></svg>
<div class="t" style="left:198px;top:852px;color:#111;letter-spacing:-0.7px">VID_2025</div>
<div class="ab" style="left:174px;top:870px;width:71px;height:21px;background:#d9d9d9;border-bottom:1px solid #c9c9c9"></div>
<svg class="ab" style="left:180px;top:871px" width="14" height="17"><path d="M0.5 1.5H9L12.5 5V16.5H0.5Z" fill="#fff" stroke="#8a8a8a"/><rect x="1" y="5" width="4" height="8" fill="#4a5a6a"/><rect x="1.5" y="6" width="1" height="1" fill="#fff"/><rect x="1.5" y="8.5" width="1" height="1" fill="#fff"/><rect x="1.5" y="11" width="1" height="1" fill="#fff"/><circle cx="6.5" cy="12" r="2.3" fill="#1a7ad8"/><path d="M8.5 12V5Q11.5 7 11 10" stroke="#1a7ad8" fill="none" stroke-width="1.4"/></svg>
<div class="t" style="left:198px;top:873px;color:#111;letter-spacing:-0.7px">VID_2025</div>
<div class="ab" style="left:174px;top:891px;width:71px;height:21px;background:#d9d9d9;border-bottom:1px solid #c9c9c9"></div>
<svg class="ab" style="left:180px;top:892px" width="14" height="17"><path d="M0.5 1.5H9L12.5 5V16.5H0.5Z" fill="#fff" stroke="#8a8a8a"/><rect x="1" y="5" width="4" height="8" fill="#4a5a6a"/><rect x="1.5" y="6" width="1" height="1" fill="#fff"/><rect x="1.5" y="8.5" width="1" height="1" fill="#fff"/><rect x="1.5" y="11" width="1" height="1" fill="#fff"/><circle cx="6.5" cy="12" r="2.3" fill="#1a7ad8"/><path d="M8.5 12V5Q11.5 7 11 10" stroke="#1a7ad8" fill="none" stroke-width="1.4"/></svg>
<div class="t" style="left:198px;top:894px;color:#111;letter-spacing:-0.7px">VID_2025</div>
<div class="ab" style="left:174px;top:912px;width:71px;height:21px;background:#d9d9d9;border-bottom:1px solid #c9c9c9"></div>
<svg class="ab" style="left:180px;top:913px" width="14" height="17"><path d="M0.5 1.5H9L12.5 5V16.5H0.5Z" fill="#fff" stroke="#8a8a8a"/><rect x="1" y="5" width="4" height="8" fill="#4a5a6a"/><rect x="1.5" y="6" width="1" height="1" fill="#fff"/><rect x="1.5" y="8.5" width="1" height="1" fill="#fff"/><rect x="1.5" y="11" width="1" height="1" fill="#fff"/><circle cx="6.5" cy="12" r="2.3" fill="#1a7ad8"/><path d="M8.5 12V5Q11.5 7 11 10" stroke="#1a7ad8" fill="none" stroke-width="1.4"/></svg>
<div class="t" style="left:198px;top:915px;color:#111;letter-spacing:-0.7px">VID_2025</div>
<div class="ab" style="left:174px;top:933px;width:71px;height:21px;background:#d9d9d9;border-bottom:1px solid #c9c9c9"></div>
<svg class="ab" style="left:180px;top:934px" width="14" height="17"><path d="M0.5 1.5H9L12.5 5V16.5H0.5Z" fill="#fff" stroke="#8a8a8a"/><rect x="1" y="5" width="4" height="8" fill="#4a5a6a"/><rect x="1.5" y="6" width="1" height="1" fill="#fff"/><rect x="1.5" y="8.5" width="1" height="1" fill="#fff"/><rect x="1.5" y="11" width="1" height="1" fill="#fff"/><circle cx="6.5" cy="12" r="2.3" fill="#1a7ad8"/><path d="M8.5 12V5Q11.5 7 11 10" stroke="#1a7ad8" fill="none" stroke-width="1.4"/></svg>
<div class="t" style="left:198px;top:936px;color:#111;letter-spacing:-0.7px">VID_2025</div>
<div class="ab" style="left:174px;top:954px;width:71px;height:21px;background:#d9d9d9;border-bottom:1px solid #c9c9c9"></div>
<svg class="ab" style="left:180px;top:955px" width="14" height="17"><path d="M0.5 1.5H9L12.5 5V16.5H0.5Z" fill="#fff" stroke="#8a8a8a"/><rect x="1" y="5" width="4" height="8" fill="#4a5a6a"/><rect x="1.5" y="6" width="1" height="1" fill="#fff"/><rect x="1.5" y="8.5" width="1" height="1" fill="#fff"/><rect x="1.5" y="11" width="1" height="1" fill="#fff"/><circle cx="6.5" cy="12" r="2.3" fill="#1a7ad8"/><path d="M8.5 12V5Q11.5 7 11 10" stroke="#1a7ad8" fill="none" stroke-width="1.4"/></svg>
<div class="t" style="left:198px;top:957px;color:#111;letter-spacing:-0.7px">VID_2025</div>
<div class="ab" style="left:174px;top:975px;width:71px;height:21px;background:#d9d9d9;border-bottom:1px solid #c9c9c9"></div>
<svg class="ab" style="left:180px;top:976px" width="14" height="17"><path d="M0.5 1.5H9L12.5 5V16.5H0.5Z" fill="#fff" stroke="#8a8a8a"/><rect x="1" y="5" width="4" height="8" fill="#4a5a6a"/><rect x="1.5" y="6" width="1" height="1" fill="#fff"/><rect x="1.5" y="8.5" width="1" height="1" fill="#fff"/><rect x="1.5" y="11" width="1" height="1" fill="#fff"/><circle cx="6.5" cy="12" r="2.3" fill="#1a7ad8"/><path d="M8.5 12V5Q11.5 7 11 10" stroke="#1a7ad8" fill="none" stroke-width="1.4"/></svg>
<div class="t" style="left:198px;top:978px;color:#111;letter-spacing:-0.7px">VID_2025</div>
<div class="ab" style="left:174px;top:996px;width:71px;height:21px;background:#d9d9d9;border-bottom:1px solid #c9c9c9"></div>
<svg class="ab" style="left:180px;top:997px" width="14" height="17"><path d="M0.5 1.5H9L12.5 5V16.5H0.5Z" fill="#fff" stroke="#8a8a8a"/><rect x="1" y="5" width="4" height="8" fill="#4a5a6a"/><rect x="1.5" y="6" width="1" height="1" fill="#fff"/><rect x="1.5" y="8.5" width="1" height="1" fill="#fff"/><rect x="1.5" y="11" width="1" height="1" fill="#fff"/><circle cx="6.5" cy="12" r="2.3" fill="#1a7ad8"/><path d="M8.5 12V5Q11.5 7 11 10" stroke="#1a7ad8" fill="none" stroke-width="1.4"/></svg>
<div class="t" style="left:198px;top:999px;color:#111;letter-spacing:-0.7px">VID_2025</div>
<div class="t" style="left:14px;top:1022px;color:#333">124 items</div>
<div class="ab" style="left:75px;top:1021px;width:1px;height:16px;background:#f0f0f0"></div>
<div class="t" style="left:85px;top:1022px;color:#333">124 items selected</div>
<div class="ab" style="left:192px;top:1021px;width:1px;height:16px;background:#f0f0f0"></div>
<div class="ab" style="left:1904px;top:89px;width:16px;height:31px;background:#f0f0f0"></div>
<svg class="ab" style="left:1906px;top:96px" width="12" height="8"><path d="M2 6L6 2L10 6" stroke="#606060" fill="none" stroke-width="1.5"/></svg>
<div class="ab" style="left:1904px;top:120px;width:16px;height:42px;background:#cdcdcd"></div>
<div class="ab" style="left:1645px;top:162px;width:1275px;height:1px;background:#5a5a5a"></div>
<div class="ab" style="left:1645px;top:216px;width:1275px;height:1px;background:#e5e5e5"></div>
<div class="ab" style="left:1645px;top:222px;width:218px;height:30px;border:1px solid #d9d9d9;border-left:none;background:#fff"></div>
<div class="ab" style="left:1832px;top:223px;width:1px;height:28px;background:#e5e5e5"></div>
<svg class="ab" style="left:1813px;top:233px" width="10" height="8"><path d="M1 1L5 5L9 1" stroke="#555" fill="none" stroke-width="1.3"/></svg>
<svg class="ab" style="left:1840px;top:229px" width="14" height="14"><path d="M11 7A4.5 4.5 0 1 1 7 2.5" stroke="#666" fill="none" stroke-width="1.4"/><path d="M5 0.5L8 2.5L5 4.5" stroke="#666" fill="none" stroke-width="1.2"/></svg>
<div class="ab" style="left:1875px;top:222px;width:50px;height:30px;border:1px solid #d9d9d9;background:#fff"></div>
<div class="t" style="left:1883px;top:230px;color:#6d6d6d">Search</div>
<div class="ab" style="left:1645px;top:928px;width:1275px;height:1px;background:#5a5a5a"></div>
<div class="ab" style="left:1904px;top:929px;width:16px;height:88px;background:#f0f0f0"></div>
<svg class="ab" style="left:1906px;top:1004px" width="12" height="8"><path d="M2 2L6 6L10 2" stroke="#606060" fill="none" stroke-width="1.5"/></svg>
<div class="ab" style="left:1872px;top:1017px;width:22px;height:23px;background:#cce8ff;border:1px solid #99d1ff"></div>
<div class="ab" style="left:1877px;top:1022px;width:3px;height:3px;border:1px solid #666"></div>
<div class="ab" style="left:1882px;top:1023px;width:4px;height:1px;background:#666"></div>
<div class="ab" style="left:1888px;top:1023px;width:4px;height:1px;background:#666"></div>
<div class="ab" style="left:1877px;top:1027px;width:3px;height:3px;border:1px solid #666"></div>
<div class="ab" style="left:1882px;top:1028px;width:4px;height:1px;background:#666"></div>
<div class="ab" style="left:1888px;top:1028px;width:4px;height:1px;background:#666"></div>
<div class="ab" style="left:1877px;top:1032px;width:3px;height:3px;border:1px solid #666"></div>
<div class="ab" style="left:1882px;top:1033px;width:4px;height:1px;background:#666"></div>
<div class="ab" style="left:1888px;top:1033px;width:4px;height:1px;background:#666"></div>
<div class="ab" style="left:1898px;top:1022px;width:14px;height:11px;border:1px solid #888;background:linear-gradient(#e8f0f8,#5a8a9a 60%,#2a4a3a)"></div>
</div>
<div class="ab" style="left:0;top:1040px;width:1920px;height:40px;background:#011520">
<svg class="ab" style="left:16px;top:12px" width="17" height="17"><path d="M0 2.5L7 1.5V8H0Z M8 1.4L17 0V8H8Z M0 9H7V15.5L0 14.5Z M8 9H17V17L8 15.6Z" fill="#fff"/></svg>
<div class="ab" style="left:48px;top:0px;width:344px;height:40px;background:#f0f0f0"></div>
<svg class="ab" style="left:60px;top:11px" width="18" height="18"><circle cx="11" cy="7" r="5.5" stroke="#222" fill="none" stroke-width="1.3"/><path d="M7 11L1.5 16.5" stroke="#222" stroke-width="1.5"/></svg>
<div class="t" style="left:88px;top:11px;font-size:14.4px;line-height:18px;color:#333">Type here to search</div>
<svg class="ab" style="left:407px;top:12px" width="17" height="16" shape-rendering="crispEdges"><rect x="0" y="0" width="12" height="1" fill="#fff"/><rect x="0" y="14" width="12" height="1" fill="#fff"/><rect x="1" y="2" width="1" height="11" fill="#fff"/><rect x="10" y="2" width="1" height="11" fill="#fff"/><rect x="1" y="2" width="10" height="1" fill="#fff"/><rect x="1" y="12" width="10" height="1" fill="#fff"/><rect x="14" y="0" width="2" height="4" fill="#fff"/><rect x="14" y="6" width="1" height="9" fill="#fff"/></svg>
<svg class="ab" style="left:455px;top:7px" width="25" height="26"><defs><linearGradient id="eg" x1="0" y1="0" x2="1" y2="0.6"><stop offset="0" stop-color="#2ab0e8"/><stop offset="0.55" stop-color="#38c0d8"/><stop offset="1" stop-color="#6ad86a"/></linearGradient></defs><circle cx="12.5" cy="12.5" r="12" fill="url(#eg)"/><path d="M0.8 13Q1 24 12 25Q19 25 23 20Q18 22 13 20Q8 17 10 13Q12 10 17 12Q14 7 8 8Q2 9 0.8 13Z" fill="#1060b0"/><path d="M10 13Q11 18 17 18Q21 18 24.5 14Q22 17 17 17Q13 16 13 13Z" fill="#2a90d8"/></svg>
<svg class="ab" style="left:504px;top:10px" width="23" height="19"><rect x="0" y="2" width="9" height="3" fill="#e8b530"/><rect x="0" y="4" width="22" height="14" fill="#f8d16a"/><rect x="6" y="11" width="11" height="7" fill="#3a8fd8"/><rect x="9" y="14" width="5" height="4" fill="#f8d16a"/></svg>
<svg class="ab" style="left:520px;top:9px" width="14" height="19"><path d="M1 1V15L4.5 11.5L7.5 18L9.5 17L6.5 10.5H11Z" fill="#fff" stroke="#222" stroke-width="0.8"/></svg>
<svg class="ab" style="left:553px;top:8px" width="28" height="28"><circle cx="11.5" cy="11.5" r="11.5" fill="#db4437"/><path d="M11.5 11.5L1.5 5.75A11.5 11.5 0 0 0 11.5 23Z" fill="#0f9d58"/><path d="M11.5 11.5L11.5 23A11.5 11.5 0 0 0 21.5 5.75Z" fill="#f4b400"/><circle cx="11.5" cy="11.5" r="5" fill="#fff"/><circle cx="11.5" cy="11.5" r="4" fill="#4285f4"/><circle cx="18" cy="18" r="7.5" fill="#6aa13a"/><text x="18" y="21.5" font-size="9" font-family="Liberation Sans" fill="#fff" text-anchor="middle" font-weight="bold">SJ</text></svg>
<svg class="ab" style="left:602px;top:8px" width="25" height="24"><rect x="1" y="0" width="8" height="22" fill="#3a9ae0" stroke="#a8d4f5" stroke-width="1"/><rect x="8" y="11" width="16" height="12" fill="#7a8a98" stroke="#cfd8e0" stroke-width="1"/><rect x="13" y="9" width="6" height="3" fill="none" stroke="#cfd8e0"/></svg>
<svg class="ab" style="left:651px;top:8px" width="24" height="24"><rect x="1" y="2" width="22" height="16" fill="#cfd8e0" stroke="#8a98a8"/><path d="M3 12L7 12L9 6L11 14L13 9L15 12H21" stroke="#2a78c8" fill="none" stroke-width="1.2"/><rect x="9" y="18" width="6" height="4" fill="#a0a8b0"/></svg>
<svg class="ab" style="left:700px;top:8px" width="24" height="24"><circle cx="12" cy="12" r="11" fill="#c8c8c8"/><circle cx="12" cy="12" r="9" fill="#f0ece4"/><path d="M8 5L14 16" stroke="#d03030" stroke-width="2"/></svg>
<svg class="ab" style="left:752px;top:9px" width="16" height="22"><path d="M14 1Q16 8 8 16L2 21M14 1Q5 4 4 15Q7 16 8 16" stroke="#1a2a5a" fill="#5a80c8" stroke-width="1"/></svg>
<svg class="ab" style="left:797px;top:8px" width="24" height="24"><path d="M5 2H19L22 22H3Z" fill="#bfe8f0"/><path d="M5 2H19L17 8H6Z" fill="#78c8d8"/><path d="M3 22H22" stroke="#5aa8b8"/></svg>
<svg class="ab" style="left:847px;top:8px" width="24" height="24"><path d="M14 1L1 12L14 23L10 12Z" fill="#f03a6a"/><path d="M10 12L22 6V18Z" fill="#3aa8e8"/></svg>
<div class="ab" style="left:884px;top:0px;width:48px;height:40px;background:#3c4650"></div>
<svg class="ab" style="left:900px;top:9px" width="16" height="22"><path d="M14 1Q16 8 8 16L2 21M14 1Q5 4 4 15Q7 16 8 16" stroke="#1a2a5a" fill="#5a80c8" stroke-width="1"/></svg>
<div class="ab" style="left:496px;top:38px;width:40px;height:2px;background:#76b9ed"></div>
<div class="ab" style="left:545px;top:38px;width:40px;height:2px;background:#76b9ed"></div>
<div class="ab" style="left:594px;top:38px;width:40px;height:2px;background:#76b9ed"></div>
<div class="ab" style="left:643px;top:38px;width:40px;height:2px;background:#76b9ed"></div>
<div class="ab" style="left:692px;top:38px;width:40px;height:2px;background:#76b9ed"></div>
<div class="ab" style="left:741px;top:38px;width:40px;height:2px;background:#76b9ed"></div>
<div class="ab" style="left:790px;top:38px;width:40px;height:2px;background:#76b9ed"></div>
<div class="ab" style="left:839px;top:38px;width:40px;height:2px;background:#76b9ed"></div>
<div class="ab" style="left:884px;top:38px;width:48px;height:2px;background:#76b9ed"></div>
<svg class="ab" style="left:1712px;top:16px" width="14" height="8"><path d="M1 7L7 1L13 7" stroke="#fff" fill="none" stroke-width="1.2"/></svg>
<svg class="ab" style="left:1734px;top:11px" width="20" height="19"><path d="M1 3L16 1V15L1 16Z" stroke="#fff" fill="none" stroke-width="1.1"/><path d="M6 8A3 3 0 0 1 11 6M11 9A3 3 0 0 1 6 11" stroke="#fff" fill="none"/><circle cx="13" cy="14.5" r="3.5" fill="#e81123"/></svg>
<svg class="ab" style="left:1758px;top:13px" width="18" height="16"><rect x="5" y="2" width="12" height="9" stroke="#fff" fill="none"/><rect x="0.5" y="0.5" width="5" height="4" stroke="#fff" fill="none"/><path d="M3 4V14M8 14H14M11 11V14" stroke="#fff"/></svg>
<svg class="ab" style="left:1782px;top:12px" width="20" height="18"><path d="M1 6H4L8 2V14L4 10H1Z" stroke="#fff" fill="none"/><circle cx="13" cy="11" r="4.5" fill="#e0393e"/><path d="M11 9L15 13M15 9L11 13" stroke="#fff" stroke-width="1.2"/></svg>
<div class="t" style="left:1814px;top:4px;font-size:11px;line-height:14px;color:#fff">5:04 PM</div>
<div class="t" style="left:1810px;top:21px;font-size:11.5px;line-height:14px;color:#fff">1/22/2026</div>
<svg class="ab" style="left:1878px;top:11px" width="26" height="26"><path d="M1 1H17V13H8L5 16V13H1Z" fill="#fff"/><path d="M4 4H14M4 7H14M4 10H11" stroke="#0a1a24"/><circle cx="16" cy="16" r="7" fill="#222" stroke="#888"/><text x="16" y="20.5" font-size="11" font-family="Liberation Sans" fill="#fff" text-anchor="middle" font-weight="bold">1</text></svg>
<div class="ab" style="left:1915px;top:0px;width:1px;height:40px;background:#555"></div>
</div>
<div class="ab" style="left:244px;top:86px;width:1402px;height:932px;background:#f0f0f0;border:1px solid #5a5a5a"></div>
<div class="ab" style="left:245px;top:87px;width:1400px;height:30px;background:#fff"></div>
<svg class="ab" style="left:255px;top:92px" width="12" height="18"><path d="M9.5 1.5Q11.5 4 8 10L4.5 13.5Q1.5 11.5 3 8Q5 3 9.5 1.5Z" stroke="#111" fill="#8fb0e0" stroke-width="0.9"/><path d="M9 3L4.5 11" stroke="#1a2a6a" stroke-width="0.8"/><path d="M4.5 11.5L4.3 16.5" stroke="#000" stroke-width="1.2"/></svg>
<div class="t" style="left:274px;top:95px;color:#000">SJ88 AutoBatch v26.5.3 (Multi-Profile)</div>
<div class="ab" style="left:1526px;top:101px;width:10px;height:1px;background:#000"></div>
<div class="ab" style="left:1571px;top:96px;width:10px;height:10px;border:1px solid #000"></div>
<svg class="ab" style="left:1616px;top:95px" width="12" height="12"><path d="M1 1L11 11M11 1L1 11" stroke="#000" stroke-width="1.1"/></svg>
<div class="t" style="left:257px;top:128px;color:#000">Profiles:</div>
<div class="ab" style="left:312px;top:123px;width:78px;height:23px;background:#e1e1e1;border:1px solid #adadad"></div>
<div class="t" style="left:312px;top:128px;width:78px;text-align:center">+ Add Profile</div>
<div class="ab" style="left:402px;top:123px;width:86px;height:23px;background:#e1e1e1;border:1px solid #adadad"></div>
<div class="t" style="left:402px;top:128px;width:86px;text-align:center">- Delete Profile</div>
<div class="ab" style="left:510px;top:123px;width:92px;height:23px;background:#e1e1e1;border:1px solid #adadad"></div>
<div class="t" style="left:529px;top:128px;">Setup Wizard</div>
<svg class="ab" style="left:514px;top:131px" width="12" height="12"><path d="M1.5 9.5L8.5 2.5L10.5 4.5L3.5 11.5Z" stroke="#444" fill="#f4f4f4" stroke-width="0.9"/><path d="M8.5 2.5L10 1L12 3L10.5 4.5Z" fill="#222"/><path d="M1.5 9.5L1 11.5L3.5 11.5" stroke="#333" fill="none" stroke-width="1.2"/></svg>
<div class="ab" style="left:1417px;top:129px;width:11px;height:11px;background:#d8f0d8;border:1px solid #3a9a48;border-top:3px solid #3a9a48"></div>
<div class="ab" style="left:1419px;top:134px;width:7px;height:4px;background:#7cc884"></div>
<div class="t" style="left:1431px;top:128px;color:#2e8b3e"><span style="display:inline-block;transform:scaleX(0.925);transform-origin:0 0">License: หมดอายุ: 2029-01-06 (1079 วัน)</span></div>
<div class="ab" style="left:250px;top:180px;width:1388px;height:831px;border:1px solid #d9d9d9"></div>
<div class="ab" style="left:250px;top:158px;width:56px;height:23px;background:#fff;border:1px solid #d9d9d9;border-bottom:none"></div>
<div class="t" style="left:259px;top:162px;">Default</div>
<div class="ab" style="left:305px;top:159px;width:44px;height:21px;background:#f0f0f0;border:1px solid #d9d9d9;border-bottom:none"></div>
<div class="t" style="left:311px;top:164px;">sj88za</div>
<div class="ab" style="left:348px;top:159px;width:40px;height:21px;background:#f0f0f0;border:1px solid #d9d9d9;border-bottom:none"></div>
<div class="t" style="left:356px;top:164px;">solar</div>
<div class="ab" style="left:255px;top:206px;width:1014px;height:798px;border:1px solid #d9d9d9"></div>
<div class="ab" style="left:257px;top:186px;width:35px;height:20px;background:#f0f0f0;border:1px solid #d9d9d9;border-bottom:none"></div>
<div class="t" style="left:261px;top:191px;">Main</div>
<div class="ab" style="left:291px;top:186px;width:77px;height:20px;background:#f0f0f0;border:1px solid #d9d9d9;border-bottom:none"></div>
<div class="t" style="left:295px;top:191px;">File Manager</div>
<div class="ab" style="left:367px;top:186px;width:45px;height:20px;background:#f0f0f0;border:1px solid #d9d9d9;border-bottom:none"></div>
<div class="t" style="left:371px;top:191px;">Admin</div>
<div class="ab" style="left:411px;top:186px;width:80px;height:20px;background:#f0f0f0;border:1px solid #d9d9d9;border-bottom:none"></div>
<div class="t" style="left:415px;top:191px;">Health Check</div>
<div class="ab" style="left:490px;top:186px;width:59px;height:20px;background:#f0f0f0;border:1px solid #d9d9d9;border-bottom:none"></div>
<div class="t" style="left:494px;top:191px;">Auto Gen</div>
<div class="ab" style="left:548px;top:186px;width:67px;height:20px;background:#f0f0f0;border:1px solid #d9d9d9;border-bottom:none"></div>
<div class="t" style="left:552px;top:191px;">Changelog</div>
<div class="ab" style="left:614px;top:186px;width:64px;height:20px;background:#f0f0f0;border:1px solid #d9d9d9;border-bottom:none"></div>
<div class="t" style="left:618px;top:191px;">Duplicates</div>
<div class="ab" style="left:677px;top:186px;width:53px;height:20px;background:#f0f0f0;border:1px solid #d9d9d9;border-bottom:none"></div>
<div class="t" style="left:681px;top:191px;">Run Log</div>
<div class="ab" style="left:728px;top:184px;width:72px;height:23px;background:#fff;border:1px solid #d9d9d9;border-bottom:none"></div>
<div class="t" style="left:734px;top:189px;">Live Stream</div>
<div class="ab" style="left:264px;top:216px;width:12px;height:12px;background:#00d4f8"></div>
<div class="ab" style="left:288px;top:213px;width:19px;height:18px;border:2px solid #111;background:#f0f0f0"></div>
<svg class="ab" style="left:291px;top:216px" width="13" height="12"><path d="M10.5 4A4.5 4.5 0 0 0 2 5M2.5 8A4.5 4.5 0 0 0 11 7" stroke="#111" fill="none" stroke-width="1.6"/><path d="M8.5 4H11V1.5M4.5 8H2V10.5" stroke="#111" fill="none" stroke-width="1.4"/></svg>
<div class="t" style="left:313px;top:213px;font-size:16px;line-height:20px;font-weight:bold">RUNNING: 10001 toech</div>
<div class="t" style="left:1169px;top:215px;">Time:</div>
<div class="t m" style="left:1210px;top:214px;font-size:13px;line-height:16px;font-weight:bold;color:#222">00:16</div>
<div class="ab" style="left:264px;top:250px;width:996px;height:102px;border:1px solid #d5d5d5"></div>
<div class="t" style="left:270px;top:243px;background:#f0f0f0;padding:0 2px">Progress</div>
<div class="ab" style="left:274px;top:271px;width:976px;height:22px;background:#e6e6e6;border:1px solid #bcbcbc"></div>
<div class="t m" style="left:698px;top:300px;font-size:11.75px;line-height:16px;color:#111">0 / 0 outputs (0%)</div>
<div class="t m" style="left:292px;top:323px;font-size:11.75px;line-height:16px;color:#111">ETA: --:--</div>
<div class="t m" style="left:1141px;top:323px;font-size:11.75px;line-height:16px;color:#111">Speed: 0.0/hr</div>
<div class="ab" style="left:264px;top:369px;width:996px;height:163px;border:1px solid #d5d5d5"></div>
<div class="t" style="left:270px;top:362px;background:#f0f0f0;padding:0 2px">Steps</div>
<div class="ab" style="left:274px;top:386px;width:976px;height:120px;background:#1a1b2e"></div>
<div class="ab" style="left:274px;top:386px;width:225px;height:25px;background:#f0f0f0"></div>
<div class="ab" style="left:278px;top:388px;width:27px;height:20px;background:#00c8f8"></div>
<div class="t m" style="left:311px;top:390px;font-size:11.5px;line-height:16px;color:#111">Initialize</div>
<div class="ab" style="left:391px;top:388px;width:27px;height:20px;background:#00f07a"></div>
<div class="t m" style="left:424px;top:390px;font-size:11.5px;line-height:16px;color:#111">Load Audio</div>
<svg class="ab" style="left:279px;top:510px" width="6" height="9"><path d="M5 1L1.5 4.5L5 8" stroke="#b0b0b0" fill="none" stroke-width="1.3"/></svg>
<svg class="ab" style="left:1239px;top:510px" width="6" height="9"><path d="M1 1L4.5 4.5L1 8" stroke="#b0b0b0" fill="none" stroke-width="1.3"/></svg>
<div class="ab" style="left:264px;top:549px;width:996px;height:114px;border:1px solid #d5d5d5"></div>
<div class="t" style="left:270px;top:542px;background:#f0f0f0;padding:0 2px">Current Files</div>
<div class="ab" style="left:274px;top:566px;width:976px;height:88px;background:#1a1b2e"></div>
<div class="t m" style="left:276px;top:568px;font-size:11.75px;line-height:16px;color:#e8e8e8">[OK] [OK] Selected: 24 audio files</div>
<div class="ab" style="left:264px;top:680px;width:996px;height:257px;border:1px solid #d5d5d5"></div>
<div class="t" style="left:270px;top:673px;background:#f0f0f0;padding:0 2px">Activity Log</div>
<div class="ab" style="left:274px;top:697px;width:959px;height:231px;background:#1a1b2e"></div>
<div class="t m" style="left:276px;top:699px;font-size:11.75px;line-height:16px;color:#e8e8e8">[17:03:53] Session started</div>
<svg class="ab" style="left:1236px;top:702px" width="10" height="7"><path d="M1 6L5 2L9 6" stroke="#b8b8b8" fill="none" stroke-width="1.3"/></svg>
<svg class="ab" style="left:1236px;top:916px" width="10" height="7"><path d="M1 1L5 5L9 1" stroke="#b8b8b8" fill="none" stroke-width="1.3"/></svg>
<div class="ab" style="left:269px;top:947px;width:74px;height:23px;background:#e1e1e1;border:1px solid #adadad"></div>
<div class="t" style="left:269px;top:951px;width:74px;text-align:center">Pause</div>
<div class="ab" style="left:353px;top:947px;width:90px;height:23px;background:#e1e1e1;border:1px solid #adadad"></div>
<div class="t" style="left:374px;top:951px;">Skip Output</div>
<div class="ab" style="left:358px;top:952px;width:14px;height:14px;border:1px solid #444;border-right-color:#aaa;border-bottom-color:#aaa;background:#e8e8e8"></div><svg class="ab" style="left:361px;top:956px" width="9" height="6"><path d="M0 0L3 3L0 6Z M3 0L6 3L3 6Z" fill="#111"/><rect x="7" y="0" width="1.2" height="6" fill="#111"/></svg>
<div class="ab" style="left:1181px;top:947px;width:74px;height:23px;background:#e1e1e1;border:1px solid #adadad"></div>
<div class="t" style="left:1209px;top:951px;">Cancel</div>
<div class="ab" style="left:1191px;top:952px;width:14px;height:14px;border:1px solid #333;border-right-color:#999;border-bottom-color:#999;background:#ddd"><div class="ab" style="left:3px;top:3px;width:6px;height:6px;background:#000"></div></div>
<div class="t" style="left:275px;top:982px;color:#50e890">OK: 0</div>
<div class="t" style="left:322px;top:982px;color:#e86878">ERR: 0</div>
<div class="t" style="left:374px;top:982px;color:#f0c050">WARN: 0</div>
<div class="ab" style="left:1276px;top:192px;width:357px;height:812px;border:1px solid #d9d9d9"></div>
<div class="t" style="left:1282px;top:185px;background:#f0f0f0;padding:0 2px">Log (Default)</div>
<div class="ab" style="left:1282px;top:205px;width:329px;height:794px;background:#fff;border-top:1px solid #a0a0a0;border-left:1px solid #a0a0a0"></div>
<div class="ab" style="left:1611px;top:205px;width:20px;height:794px;background:#f0f0f0"></div>
<svg class="ab" style="left:1613px;top:210px" width="10" height="7"><path d="M1 6L5 2L9 6" stroke="#b8b8b8" fill="none" stroke-width="1.3"/></svg>
<svg class="ab" style="left:1613px;top:988px" width="10" height="7"><path d="M1 1L5 5L9 1" stroke="#b8b8b8" fill="none" stroke-width="1.3"/></svg>
<div class="t m" style="left:1284px;top:208px;font-size:13.33px;line-height:16px;color:#000">[ADMIN] Scanned 32 products</div>
<div class="t m" style="left:1284px;top:224px;font-size:13.33px;line-height:16px;color:#000">========================================</div>
<div class="t m" style="left:1284px;top:240px;font-size:13.33px;line-height:16px;color:#000">====================</div>
<div class="t m" style="left:1284px;top:256px;font-size:13.33px;line-height:16px;color:#000">Profile: Default initialized.</div>
<div class="t m" style="left:1284px;top:272px;font-size:13.33px;line-height:16px;color:#000">========================================</div>
<div class="t m" style="left:1284px;top:288px;font-size:13.33px;line-height:16px;color:#000">====================</div>
<div class="t m" style="left:1284px;top:304px;font-size:13.33px;line-height:16px;color:#000">Master dir: E:/All Production/000000semi</div>
<div class="t m" style="left:1284px;top:320px;font-size:13.33px;line-height:16px;color:#000">final/All product</div>
<div class="t m" style="left:1284px;top:336px;font-size:13.33px;line-height:16px;color:#000">Output dir: E:/All Production/out</div>
<div class="t m" style="left:1284px;top:352px;font-size:13.33px;line-height:16px;color:#000">RunLog DB:</div>
<div class="t m" style="left:1284px;top:368px;font-size:13.33px;line-height:16px;color:#000">C:\Users\Administrator\AppData\Local\SJ8</div>
<div class="t m" style="left:1284px;top:384px;font-size:13.33px;line-height:16px;color:#000">8Data\sj88_runlog_v2_Default.db</div>
<div class="t m" style="left:1284px;top:400px;font-size:13.33px;line-height:16px;color:#000">========================================</div>
<div class="t m" style="left:1284px;top:416px;font-size:13.33px;line-height:16px;color:#000">====================</div>
<div class="ab" style="left:1284px;top:431px;width:324px;height:224px;background:#0078d7"></div>
<div class="ab" style="left:1284px;top:431px;width:8px;height:16px;background:#fff"></div>
<div class="t m" style="left:1284px;top:432px;font-size:13.33px;line-height:16px;color:#000">C</div>
<div class="t m" style="left:1284px;top:432px;font-size:13.33px;line-height:16px;color:#fff">&nbsp;onfig reloaded from Setup Wizard.</div>
<div class="t m" style="left:1284px;top:448px;font-size:13.33px;line-height:16px;color:#fff">[AUTO] Added 2 products to queue</div>
<div class="t m" style="left:1284px;top:464px;font-size:13.33px;line-height:16px;color:#fff">[PROCESS] Starting: 10001 toech</div>
<div class="t m" style="left:1284px;top:480px;font-size:13.33px;line-height:16px;color:#fff">[VOICE] Found 0 files in vdo_long_sound/</div>
<div class="t m" style="left:1284px;top:496px;font-size:13.33px;line-height:16px;color:#fff">[INFO] Mode Detection: AI mode detected</div>
<div class="t m" style="left:1284px;top:512px;font-size:13.33px;line-height:16px;color:#fff">(13 files)</div>
<div class="t m" style="left:1284px;top:528px;font-size:13.33px;line-height:16px;color:#fff">[INFO] audio files=24</div>
<div class="t m" style="left:1284px;top:544px;font-size:13.33px;line-height:16px;color:#fff">[INFO] audio_mode=random -> shuffled</div>
<div class="t m" style="left:1284px;top:560px;font-size:13.33px;line-height:16px;color:#fff">[INFO] Exhaust Mode ON (first run, quota</div>
<div class="t m" style="left:1284px;top:576px;font-size:13.33px;line-height:16px;color:#fff">5): Will create up to 24 outputs (stop</div>
<div class="t m" style="left:1284px;top:592px;font-size:13.33px;line-height:16px;color:#fff">when types < 5)</div>
<div class="t m" style="left:1284px;top:608px;font-size:13.33px;line-height:16px;color:#fff">[INFO] Selected long videos (Base</div>
<div class="t m" style="left:1284px;top:624px;font-size:13.33px;line-height:16px;color:#fff">Priority): wide=2, mid=2, tele=1</div>
<div class="t m" style="left:1284px;top:640px;font-size:13.33px;line-height:16px;color:#fff">[INFO] vdo_long total=713, ใช้รอบนี้=5</div>
<div class="ab" style="left:1284px;top:655px;width:1px;height:16px;background:#000"></div>
<div class="t m" style="left:1284px;top:656px;font-size:13.33px;line-height:16px;color:#000">[CLEAN] Removed old tmp: tmp/</div>
<div class="t" style="left:1599px;top:946px;font-size:20px;line-height:24px;color:rgba(160,160,160,0.7)">Activate Windows</div>
<div class="t" style="left:1599px;top:972px;font-size:15px;line-height:18px;color:rgba(160,160,160,0.7)">Go to Settings to activate Windows.</div></body></html>
